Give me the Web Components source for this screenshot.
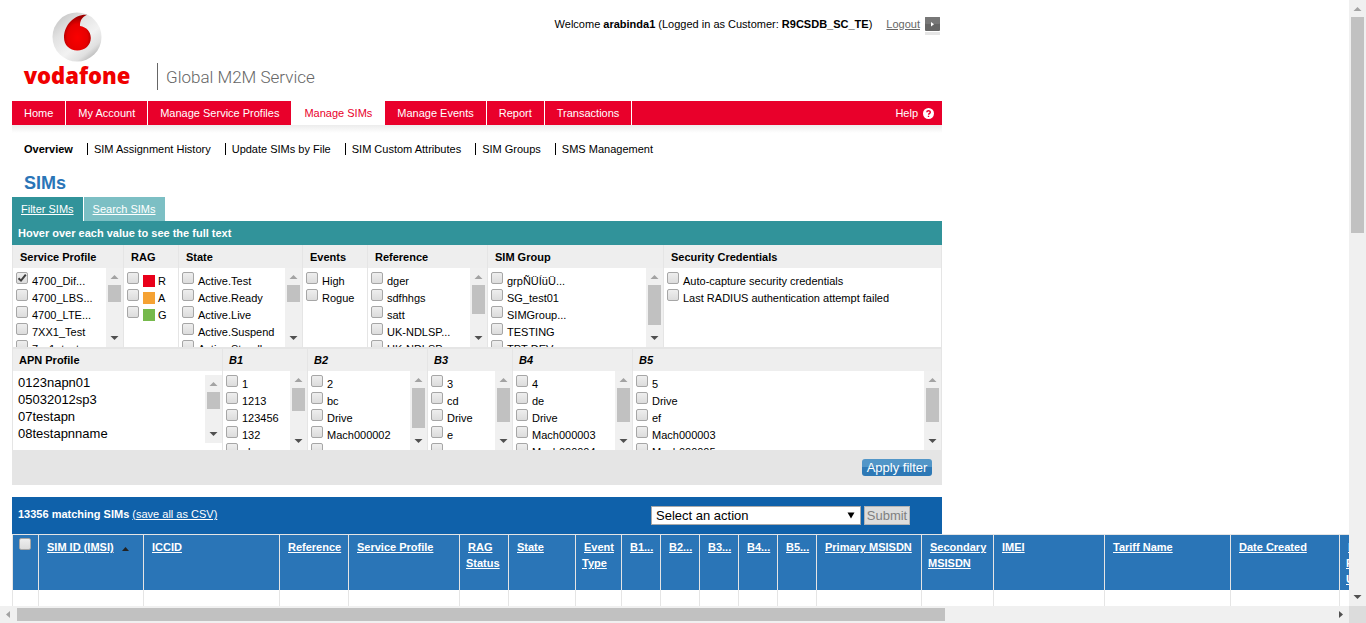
<!DOCTYPE html>
<html lang="en">
<head>
<meta charset="utf-8">
<title>SIMs - Global M2M Service</title>
<style>
html, body { margin: 0; height: 100%; background: #fff; }
body { font: 11px/16px "Liberation Sans", Arial, sans-serif; color: #000; }
</style>
</head>
<body>
<page-frame>
  <site-header></site-header>
  <main-nav></main-nav>
  <sub-nav></sub-nav>
  <filter-panel></filter-panel>
  <sim-results></sim-results>
</page-frame>

<script>
const base = `:host, * { box-sizing: border-box; } a { color: inherit; }`;
const tick = `
input[type=checkbox] { appearance: none; flex: none; width: 12px; height: 12px; margin: 0;
  border: 1px solid #a6a6a6; border-radius: 2px; background: linear-gradient(#eee, #dcdcdc); }
input[type=checkbox]:checked { background: url("data:image/svg+xml,%3Csvg xmlns='http://www.w3.org/2000/svg' viewBox='0 0 10 10'%3E%3Cpath d='M1.5 5.2L4 7.6L8.8 1.6' fill='none' stroke='%23404040' stroke-width='2'/%3E%3C/svg%3E") center / 10px 10px no-repeat, linear-gradient(#eee, #dcdcdc); }`;

function define(name, html) {
  customElements.define(name, class extends HTMLElement {
    constructor() {
      super();
      this.attachShadow({ mode: 'open' });
    }
    connectedCallback() {
      const t = document.createElement('template');
      t.innerHTML = `<style>${base}</style>` + (typeof html === 'function' ? html(this) : html);
      this.shadowRoot.replaceChildren(t.content.cloneNode(true));
    }
  });
}

/* thumb and rest are the two shares of the track */
define('scroll-bar', el => {
  const across = el.hasAttribute('across');
  const first = across ? '10,5 10,12 6,8.5' : '4.5,11 12.5,11 8.5,7';
  const last = across ? '7,5 7,12 11,8.5' : '4.5,6 12.5,6 8.5,10';
  return `<style>
  :host { display: flex; flex-direction: ${across ? 'row' : 'column'}; background: #f0f0f0; ${across ? 'height' : 'width'}: 17px; }
  svg { display: block; flex: none; width: 17px; height: 17px; }
  .thumb { flex: ${el.getAttribute('thumb')} 0 0; background: #c1c1c1; margin: ${across ? '2px 0' : '0 2px'}; }
  .rest { flex: ${el.getAttribute('rest')} 0 0; }
  </style>
  <svg viewBox="0 0 17 17"><polygon points="${first}" fill="#a3a3a3"/></svg>
  <div class="thumb"></div><div class="rest"></div>
  <svg viewBox="0 0 17 17"><polygon points="${last}" fill="#505050"/></svg>`;
});

define('page-frame', `<style>
  :host { display: grid; grid-template: minmax(0, 1fr) 17px / minmax(0, 1fr) 17px; height: 100vh; }
  main { overflow: hidden; padding-left: 12px; }
  .corner { background: #dcdcdc; }
  </style>
  <main><slot></slot></main>
  <scroll-bar thumb="216" rest="356"></scroll-bar>
  <scroll-bar across thumb="928" rest="387"></scroll-bar>
  <div class="corner"></div>`);

define('site-header', `<style>
  :host { display: flex; justify-content: space-between; width: 930px; height: 101px; padding: 12px 2px 0 12px; }
  .brand { display: flex; gap: 27px; align-items: flex-end; height: 78px; }
  .logo { display: flex; flex-direction: column; align-items: center; height: 78px; width: 106px; }
  .logo svg { display: block; width: 50px; height: 50px; }
  .word { font: 800 22px/26px "Open Sans", sans-serif; color: #f00000; }
  .service { border-left: 1px solid #666; padding-left: 8px; height: 27px; font: 300 17px/29px Roboto, sans-serif; color: #666; white-space: nowrap; }
  .user { display: flex; height: 24px; line-height: 24px; white-space: nowrap; }
  .user a { color: #666; margin: 0 5px 0 14px; }
  .user svg { display: block; width: 15px; height: 20px; margin-top: 5px; }
  </style>
  <div class="brand">
    <div class="logo">
      <svg viewBox="0 0 50 50" aria-hidden="true">
        <defs>
          <linearGradient id="ball" x1=".15" y1=".1" x2=".85" y2=".95"><stop offset="0" stop-color="#cacaca"/><stop offset=".25" stop-color="#e2e2e2"/><stop offset=".6" stop-color="#f2f2f2"/><stop offset=".82" stop-color="#e0e0e0"/><stop offset="1" stop-color="#b0b0b0"/></linearGradient>
          <radialGradient id="drop" cx=".5" cy=".64" r=".58"><stop offset="0" stop-color="#fa0000"/><stop offset=".65" stop-color="#e60000"/><stop offset="1" stop-color="#a00000"/></radialGradient>
        </defs>
        <circle cx="25" cy="25" r="24.500" fill="url(#ball)"/>
        <path d="M35 2.800C23 2 12 12.500 12 25.500C12 33 17.500 38.500 25.300 38.500C33 38.500 38.800 33 38.800 26C38.800 19.500 34.500 15.200 28 14C27.800 9 30 5 35 2.800Z" fill="url(#drop)"/>
      </svg>
      <span class="word">vodafone</span>
    </div>
    <div class="service">Global M2M Service</div>
  </div>
  <div class="user"><span>Welcome <b>arabinda1</b> (Logged in as Customer: <b>R9CSDB_SC_TE</b>)</span>
    <a href="#logout">Logout</a>
    <svg viewBox="0 0 15 20" aria-hidden="true"><rect width="15" height="14" rx="1" fill="#666"/><rect width="15" height="7" rx="1" fill="#777"/><path d="M6 5L9 7.200L6 9.500Z" fill="#fff"/><rect y="15" width="15" height="3" fill="#e6e6e6"/></svg>
  </div>`);

define('main-nav', `<style>
  :host { display: block; width: 930px; }
  nav { display: flex; height: 24px; line-height: 24px; background: #e9002b; color: #fff; white-space: nowrap; }
  a { padding: 0 12px; text-decoration: none; border-right: 1px solid #fff; }
  a.on { background: #fff; color: #e9002b; }
  a.help { display: flex; align-items: center; gap: 5px; margin-left: auto; padding: 0 8px; border: 0; }
  svg { display: block; width: 11px; height: 11px; }
  .shade { height: 8px; background: linear-gradient(#ececec, #fff); }
  </style>
  <nav>
    <a href="#home">Home</a><a href="#account">My Account</a><a href="#profiles">Manage Service Profiles</a><a class="on" href="#sims">Manage SIMs</a><a href="#events">Manage Events</a><a href="#report">Report</a><a href="#transactions">Transactions</a>
    <a class="help" href="#help">Help <svg viewBox="0 0 11 11" aria-hidden="true"><circle cx="5.500" cy="5.500" r="5.500" fill="#fff"/><path d="M3.800 4.300C3.800 2.200 7.300 2.200 7.300 4.200C7.300 5.400 5.700 5.400 5.600 6.700M5.500 7.700V9" fill="none" stroke="#e9002b" stroke-width="1.400"/></svg></a>
  </nav>
  <div class="shade"></div>`);

define('sub-nav', `<style>
  :host { display: block; width: 930px; padding: 8px 0 3px 12px; }
  nav { display: flex; align-items: center; gap: 14px; height: 16px; white-space: nowrap; }
  a { text-decoration: none; line-height: 12px; }
  a + a { border-left: 1px solid #000; padding-left: 6px; }
  a.on { font-weight: bold; }
  h1 { margin: 15px 0 0; font-size: 18px; line-height: 22px; color: #2a75b7; }
  </style>
  <nav><a class="on" href="#overview">Overview</a><a href="#history">SIM Assignment History</a><a href="#update">Update SIMs by File</a><a href="#attributes">SIM Custom Attributes</a><a href="#groups">SIM Groups</a><a href="#sms">SMS Management</a></nav>
  <h1>SIMs</h1>`);

/* one titled list of tick boxes; items are separated by "|" */
define('filter-column', el => {
  const items = (el.getAttribute('items') || '').split('|').filter(Boolean);
  const thumb = el.getAttribute('thumb');
  const rows = items.map((item, i) => {
    const [text, colour] = item.split('#');
    const swatch = colour ? `<i style="background:#${colour}"></i>` : '';
    return `<label><input type="checkbox"${el.hasAttribute('first') && !i ? ' checked' : ''}>${swatch}<span>${text}</span></label>`;
  }).join('');
  return `<style>${tick}
  :host { display: block; border-left: 1px solid #e5e5e5; background: #fff; min-width: 0; }
  h2 { margin: 0; padding-left: 7px; background: #eee; font-size: 11px; line-height: 24px; height: 23px; white-space: nowrap; }
  :host([low]) h2 { padding-left: 6px; height: 22px; line-height: 22px; }
  :host([slant]) h2 { font-style: italic; }
  .body { display: flex; justify-content: space-between; height: 79px; overflow: hidden; }
  .list { flex: 1; min-width: 0; padding: 4px 0 0 3px; }
  label { display: flex; height: 17px; line-height: 18px; white-space: nowrap; }
  span { margin-left: 4px; }
  i { width: 12px; height: 12px; margin: 3px 0 0 4px; }
  i + span { margin-left: 3px; }
  scroll-bar { flex: none; }
  </style>
  <h2>${el.getAttribute('title-text')}</h2>
  <div class="body"><slot><div class="list">${rows}</div>${thumb ? `<scroll-bar thumb="${thumb}" rest="${45 - thumb}"></scroll-bar>` : ''}</slot></div>`;
});

define('filter-panel', `<style>
  :host { display: block; width: 930px; }
  .tabs { display: flex; gap: 1px; line-height: 24px; color: #fff; }
  .tabs a { padding: 0 9px; background: #7cbfc4; }
  .tabs a.on { background: #31939a; }
  .hint { background: #31939a; color: #fff; font-weight: bold; line-height: 24px; padding-left: 6px; }
  .row { display: grid; border-right: 1px solid #e5e5e5; }
  .top { grid-template-columns: 111px 55px 124px 65px 120px 176px 1fr; border-bottom: 2px solid #e5e5e5; }
  .bottom { grid-template-columns: 210px 85px 120px 85px 120px 1fr; }
  .apn { display: flex; flex: 1; height: 68px; margin-top: 4px; }
  select { flex: 1; min-width: 0; height: 68px; margin: 0; padding: 0; border: 0; outline: 0; overflow: hidden; background: #fff; font: 13px/17px "Liberation Sans", Arial, sans-serif; color: #000; scrollbar-width: none; }
  option { height: 17px; min-height: 17px; padding: 0 0 0 5px; line-height: 17px; }
  .foot { display: flex; justify-content: flex-end; padding: 9px 10px; background: #e5e5e5; }
  button { width: 70px; height: 17px; padding: 0; border: 0; border-radius: 3px; background: linear-gradient(#5296c8 50%, #2e79b6 50%); color: #fff; font: 13px/17px "Liberation Sans", Arial, sans-serif; }
  </style>
  <div class="tabs"><a class="on" href="#filter">Filter SIMs</a><a href="#search">Search SIMs</a></div>
  <div class="hint">Hover over each value to see the full text</div>
  <div class="row top">
    <filter-column title-text="Service Profile" first thumb="17" items="4700_Dif...|4700_LBS...|4700_LTE...|7XX1_Test|7xx1_test"></filter-column>
    <filter-column title-text="RAG" items="R#e9001a|A#f5a233|G#76b94c"></filter-column>
    <filter-column title-text="State" thumb="17" items="Active.Test|Active.Ready|Active.Live|Active.Suspend|Active.Standby"></filter-column>
    <filter-column title-text="Events" items="High|Rogue"></filter-column>
    <filter-column title-text="Reference" thumb="29" items="dger|sdfhhgs|satt|UK-NDLSP...|UK-NDLSP..."></filter-column>
    <filter-column title-text="SIM Group" thumb="40" items="grpÑÜÍüÜ...|SG_test01|SIMGroup...|TESTING|TPT-DEV"></filter-column>
    <filter-column title-text="Security Credentials" items="Auto-capture security credentials|Last RADIUS authentication attempt failed"></filter-column>
  </div>
  <div class="row bottom">
    <filter-column low title-text="APN Profile">
      <div class="apn"><select multiple size="4" aria-label="APN Profile"><option>0123napn01</option><option>05032012sp3</option><option>07testapn</option><option>08testapnname</option></select><scroll-bar thumb="17" rest="17"></scroll-bar></div>
    </filter-column>
    <filter-column low slant title-text="B1" thumb="23" items="1|1213|123456|132|abc"></filter-column>
    <filter-column low slant title-text="B2" thumb="40" items="2|bc|Drive|Mach000002|new"></filter-column>
    <filter-column low slant title-text="B3" thumb="34" items="3|cd|Drive|e|ace"></filter-column>
    <filter-column low slant title-text="B4" thumb="34" items="4|de|Drive|Mach000003|Mach000004"></filter-column>
    <filter-column low slant title-text="B5" thumb="34" items="5|Drive|ef|Mach000003|Mach000005"></filter-column>
  </div>
  <div class="foot"><button type="button">Apply filter</button></div>`);

const columns = [['SIM ID (IMSI)', 105], ['ICCID', 136], ['Reference', 69], ['Service Profile', 111], ['RAG Status', 49], ['State', 67], ['Event Type', 46], ['B1...', 39], ['B2...', 39], ['B3...', 39], ['B4...', 39], ['B5...', 39], ['Primary MSISDN', 105], ['Secondary MSISDN', 72], ['IMEI', 111], ['Tariff Name', 126], ['Date Created', 109], ['Last Profile Update', 60]];

define('sim-results', `<style>${tick}
  :host { display: block; margin-top: 12px; }
  .bar { display: flex; align-items: center; width: 930px; height: 37px; padding: 0 32px 0 6px; background: #0f61aa; color: #fff; }
  .count { margin-right: auto; line-height: 34px; height: 37px; }
  select { width: 210px; height: 19px; padding: 0 4px; border: 1px solid #a9a9a9; border-radius: 0; appearance: none; color: #000;
    background: url("data:image/svg+xml,%3Csvg xmlns='http://www.w3.org/2000/svg' viewBox='0 0 8 7'%3E%3Cpath d='M0.500 0.500H7.500L4 6.500Z'/%3E%3C/svg%3E") right 5px center / 8px 7px no-repeat #fff; }
  select, button { font: 13px/17px "Liberation Sans", Arial, sans-serif; }
  button { width: 46px; height: 19px; margin-left: 3px; padding: 0; border: 1px solid #b4b4b4; background: #ddd; color: #808080; }
  table { table-layout: fixed; width: 1387px; border-spacing: 0; border-top: 1px solid #e5e5e5; }
  th, td { padding: 0; border-left: 1px solid #e5e5e5; }
  th { height: 55px; padding: 4px 6px 3px; vertical-align: top; text-align: left; text-indent: 2px; background: #2a75b7; color: #fff; line-height: 16px; }
  th.pick { padding: 3px 6px; text-indent: 0; }
  th.pick input { display: block; }
  th svg { width: 7px; height: 4px; margin-left: 5px; }
  td { height: 32px; }
  </style>
  <div class="bar">
    <div class="count"><b>13356 matching SIMs</b> <a href="#csv">(save all as CSV)</a></div>
    <select aria-label="Action"><option>Select an action</option></select>
    <button type="button" disabled>Submit</button>
  </div>
  <table>
    <colgroup><col style="width:26px">${columns.map(c => `<col style="width:${c[1]}px">`).join('')}</colgroup>
    <thead><tr><th class="pick"><input type="checkbox" aria-label="Select all SIMs"></th>${columns.map((c, i) => `<th><a href="#sort">${c[0]}</a>${i ? '' : ' <svg viewBox="0 0 7 4" aria-hidden="true"><path d="M0 4L3.500 0L7 4Z" fill="#222"/></svg>'}</th>`).join('')}</tr></thead>
    <tbody><tr>${'<td></td>'.repeat(columns.length + 1)}</tr></tbody>
  </table>`);
</script>
</body>
</html>
